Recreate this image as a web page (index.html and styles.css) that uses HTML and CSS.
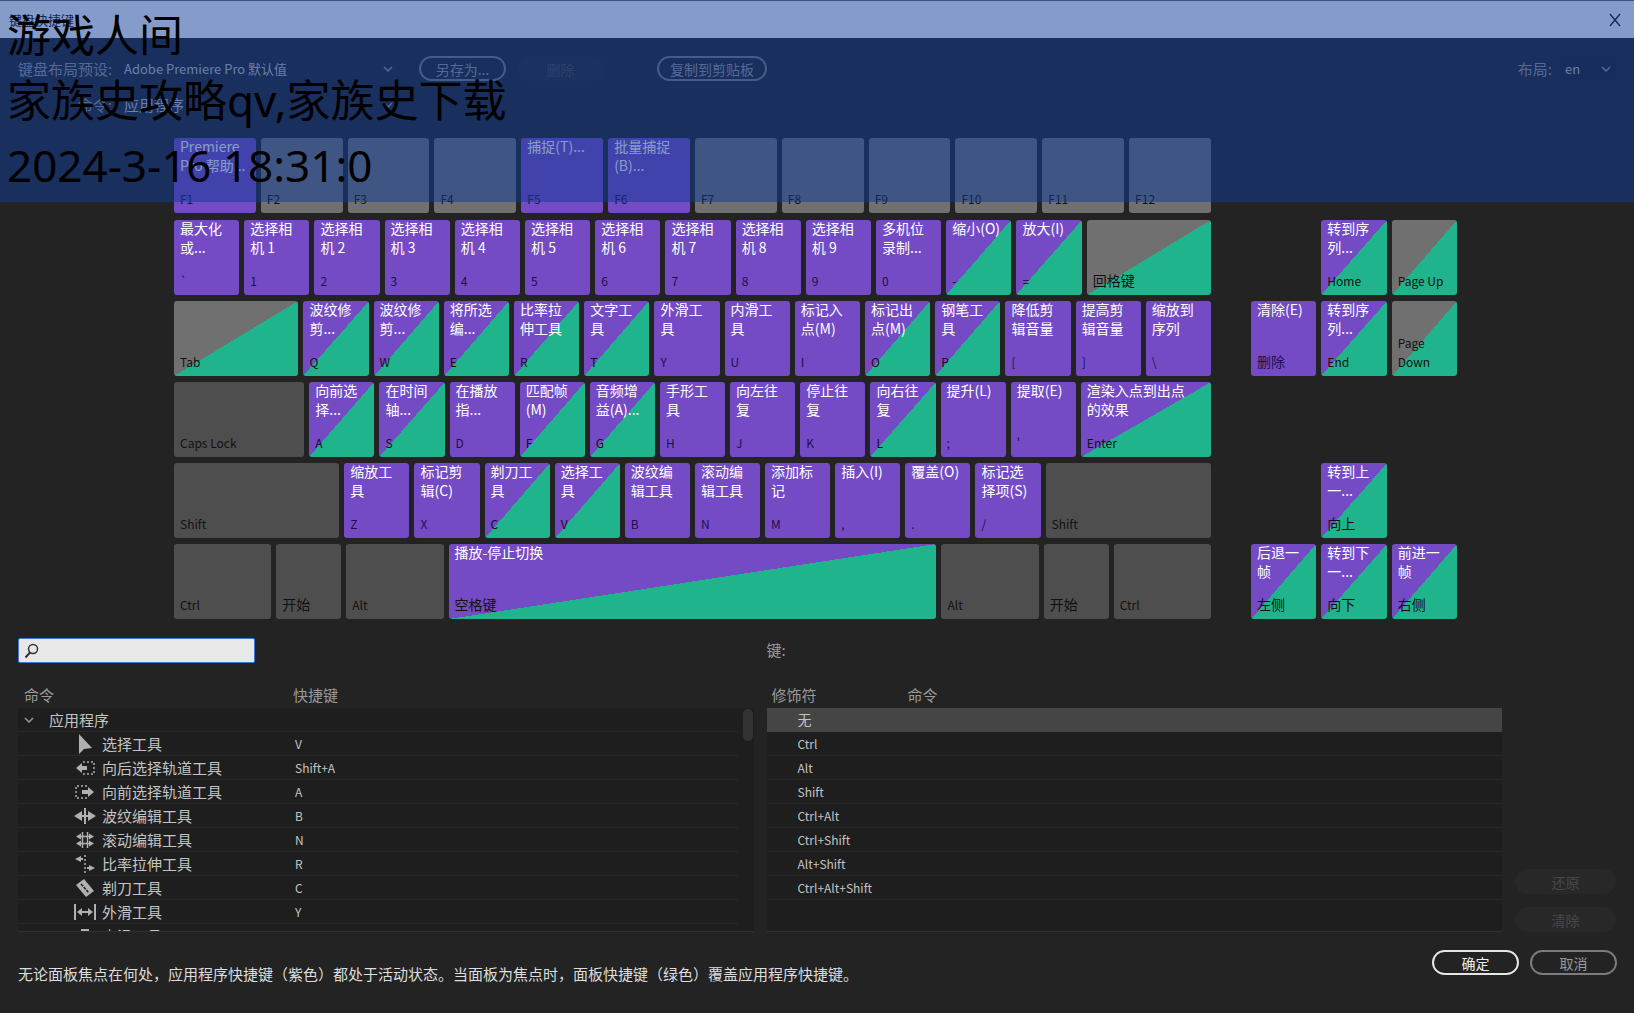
FILE: index.html
```html
<!DOCTYPE html>
<html lang="zh-CN">
<head>
<meta charset="utf-8">
<meta name="viewport" content="width=device-width, initial-scale=1">
<title>键盘快捷键</title>
<link rel="stylesheet" href="styles.css">
</head>
<body>
<div class="dialog">
  <header class="titlebar">
    <h1>键盘快捷键</h1>
    <button class="close" aria-label="关闭"><svg width="12" height="14" viewBox="0 0 12 14"><path d="M1 1l10 12M11 1L1 13" fill="none" stroke="currentColor" stroke-width="1.3"/></svg></button>
  </header>

  <section class="toolbar">
    <div class="toolbar-row">
      <label class="field-label" for="preset">键盘布局预设:</label>
      <span class="picker picker-wide"><select id="preset"><option>Adobe Premiere Pro 默认值</option></select><svg width="10" height="6" viewBox="0 0 10 6"><path d="M1 1l4 4 4-4"/></svg></span>
      <button class="pill">另存为...</button>
      <button class="pill" disabled>删除</button>
      <button class="pill copy">复制到剪贴板</button>
      <label class="layout-label" for="layout">布局:</label>
      <span class="picker picker-small"><select id="layout"><option>en</option></select><svg width="10" height="6" viewBox="0 0 10 6"><path d="M1 1l4 4 4-4"/></svg></span>
    </div>
    <div class="toolbar-row">
      <label class="field-label" for="scope">命令:</label>
      <span class="picker picker-wide"><select id="scope"><option>应用程序</option></select><svg width="10" height="6" viewBox="0 0 10 6"><path d="M1 1l4 4 4-4"/></svg></span>
    </div>
  </section>

  <section class="keyboard">
    <div class="main-keys">
      <div class="key-row fn-row">
        <button class="key app"><span>Premiere<br>Pro 帮助...</span><kbd>F1</kbd></button>
        <button class="key free"><kbd>F2</kbd></button>
        <button class="key free"><kbd>F3</kbd></button>
        <button class="key free"><kbd>F4</kbd></button>
        <button class="key app"><span>捕捉(T)...</span><kbd>F5</kbd></button>
        <button class="key app"><span>批量捕捉<br>(B)...</span><kbd>F6</kbd></button>
        <button class="key free"><kbd>F7</kbd></button>
        <button class="key free"><kbd>F8</kbd></button>
        <button class="key free"><kbd>F9</kbd></button>
        <button class="key free"><kbd>F10</kbd></button>
        <button class="key free"><kbd>F11</kbd></button>
        <button class="key free"><kbd>F12</kbd></button>
      </div>
      <div class="key-row">
        <button class="key app"><span>最大化<br>或...</span><kbd>`</kbd></button>
        <button class="key app"><span>选择相<br>机 1</span><kbd>1</kbd></button>
        <button class="key app"><span>选择相<br>机 2</span><kbd>2</kbd></button>
        <button class="key app"><span>选择相<br>机 3</span><kbd>3</kbd></button>
        <button class="key app"><span>选择相<br>机 4</span><kbd>4</kbd></button>
        <button class="key app"><span>选择相<br>机 5</span><kbd>5</kbd></button>
        <button class="key app"><span>选择相<br>机 6</span><kbd>6</kbd></button>
        <button class="key app"><span>选择相<br>机 7</span><kbd>7</kbd></button>
        <button class="key app"><span>选择相<br>机 8</span><kbd>8</kbd></button>
        <button class="key app"><span>选择相<br>机 9</span><kbd>9</kbd></button>
        <button class="key app"><span>多机位<br>录制...</span><kbd>0</kbd></button>
        <button class="key both"><span>缩小(O)</span><kbd>-</kbd></button>
        <button class="key both"><span>放大(I)</span><kbd>=</kbd></button>
        <button class="key panel w-tab"><kbd class="zh">回格键</kbd></button>
      </div>
      <div class="key-row">
        <button class="key panel w-tab"><kbd>Tab</kbd></button>
        <button class="key both"><span>波纹修<br>剪...</span><kbd>Q</kbd></button>
        <button class="key both"><span>波纹修<br>剪...</span><kbd>W</kbd></button>
        <button class="key both"><span>将所选<br>编...</span><kbd>E</kbd></button>
        <button class="key both"><span>比率拉<br>伸工具</span><kbd>R</kbd></button>
        <button class="key both"><span>文字工<br>具</span><kbd>T</kbd></button>
        <button class="key app"><span>外滑工<br>具</span><kbd>Y</kbd></button>
        <button class="key app"><span>内滑工<br>具</span><kbd>U</kbd></button>
        <button class="key app"><span>标记入<br>点(M)</span><kbd>I</kbd></button>
        <button class="key both"><span>标记出<br>点(M)</span><kbd>O</kbd></button>
        <button class="key both"><span>钢笔工<br>具</span><kbd>P</kbd></button>
        <button class="key app"><span>降低剪<br>辑音量</span><kbd>[</kbd></button>
        <button class="key app"><span>提高剪<br>辑音量</span><kbd>]</kbd></button>
        <button class="key app"><span>缩放到<br>序列</span><kbd>\</kbd></button>
      </div>
      <div class="key-row">
        <button class="key fixed w-caps"><kbd>Caps Lock</kbd></button>
        <button class="key both"><span>向前选<br>择...</span><kbd>A</kbd></button>
        <button class="key both"><span>在时间<br>轴...</span><kbd>S</kbd></button>
        <button class="key app"><span>在播放<br>指...</span><kbd>D</kbd></button>
        <button class="key both"><span>匹配帧<br>(M)</span><kbd>F</kbd></button>
        <button class="key both"><span>音频增<br>益(A)...</span><kbd>G</kbd></button>
        <button class="key app"><span>手形工<br>具</span><kbd>H</kbd></button>
        <button class="key app"><span>向左往<br>复</span><kbd>J</kbd></button>
        <button class="key app"><span>停止往<br>复</span><kbd>K</kbd></button>
        <button class="key both"><span>向右往<br>复</span><kbd>L</kbd></button>
        <button class="key app"><span>提升(L)</span><kbd>;</kbd></button>
        <button class="key app"><span>提取(E)</span><kbd>'</kbd></button>
        <button class="key both w-caps"><span>渲染入点到出点<br>的效果</span><kbd>Enter</kbd></button>
      </div>
      <div class="key-row">
        <button class="key fixed w-shift"><kbd>Shift</kbd></button>
        <button class="key app"><span>缩放工<br>具</span><kbd>Z</kbd></button>
        <button class="key app"><span>标记剪<br>辑(C)</span><kbd>X</kbd></button>
        <button class="key both"><span>剃刀工<br>具</span><kbd>C</kbd></button>
        <button class="key both"><span>选择工<br>具</span><kbd>V</kbd></button>
        <button class="key app"><span>波纹编<br>辑工具</span><kbd>B</kbd></button>
        <button class="key app"><span>滚动编<br>辑工具</span><kbd>N</kbd></button>
        <button class="key app"><span>添加标<br>记</span><kbd>M</kbd></button>
        <button class="key app"><span>插入(I)</span><kbd>,</kbd></button>
        <button class="key app"><span>覆盖(O)</span><kbd>.</kbd></button>
        <button class="key app"><span>标记选<br>择项(S)</span><kbd>/</kbd></button>
        <button class="key fixed w-shift"><kbd>Shift</kbd></button>
      </div>
      <div class="key-row">
        <button class="key fixed w-ctrl"><kbd>Ctrl</kbd></button>
        <button class="key fixed"><kbd class="zh">开始</kbd></button>
        <button class="key fixed w-ctrl"><kbd>Alt</kbd></button>
        <button class="key both w-space"><span>播放-停止切换</span><kbd class="zh">空格键</kbd></button>
        <button class="key fixed w-ctrl"><kbd>Alt</kbd></button>
        <button class="key fixed"><kbd class="zh">开始</kbd></button>
        <button class="key fixed w-ctrl"><kbd>Ctrl</kbd></button>
      </div>
    </div>

    <div class="nav-keys">
      <div class="key-row fn-row"></div>
      <div class="key-row">
        <i class="blank"></i>
        <button class="key both"><span>转到序<br>列...</span><kbd>Home</kbd></button>
        <button class="key panel"><kbd>Page Up</kbd></button>
      </div>
      <div class="key-row">
        <button class="key app"><span>清除(E)</span><kbd class="zh">删除</kbd></button>
        <button class="key both"><span>转到序<br>列...</span><kbd>End</kbd></button>
        <button class="key panel"><kbd>Page<br>Down</kbd></button>
      </div>
      <div class="key-row"></div>
      <div class="key-row">
        <i class="blank"></i>
        <button class="key both"><span>转到上<br>一...</span><kbd class="zh">向上</kbd></button>
        <i class="blank"></i>
      </div>
      <div class="key-row">
        <button class="key both"><span>后退一<br>帧</span><kbd class="zh">左侧</kbd></button>
        <button class="key both"><span>转到下<br>一...</span><kbd class="zh">向下</kbd></button>
        <button class="key both"><span>前进一<br>帧</span><kbd class="zh">右侧</kbd></button>
      </div>
    </div>
  </section>

  <section class="lists">
    <div class="search">
      <svg width="15" height="16" viewBox="0 0 15 16"><circle cx="9" cy="6" r="4.5" fill="none" stroke="#333" stroke-width="1.5"/><path d="M6 9.500L1.500 14.500" stroke="#333" stroke-width="2"/></svg>
      <input type="search" aria-label="搜索命令">
    </div>
    <p class="key-name">键:</p>

    <div class="list commands">
      <table>
        <colgroup><col class="col-command"><col></colgroup>
        <thead><tr><th>命令</th><th>快捷键</th></tr></thead>
        <tbody>
          <tr><td><div class="group"><svg width="10" height="6" viewBox="0 0 10 6"><path d="M1 1l4 4 4-4"/></svg>应用程序</div></td><td></td></tr>
          <tr><td><div class="tool"><svg width="22" height="20" viewBox="0 0 22 20"><path class="f" d="M5 0v20l5-5 8-1z"/></svg>选择工具</div></td><td>V</td></tr>
          <tr><td><div class="tool"><svg width="22" height="20" viewBox="0 0 22 20"><path class="f" d="M2 10l6-5v3h5v4H8v3z"/><path class="s" stroke-dasharray="2 2" d="M9 4h11v12H9"/></svg>向后选择轨道工具</div></td><td>Shift+A</td></tr>
          <tr><td><div class="tool"><svg width="22" height="20" viewBox="0 0 22 20"><path class="f" d="M20 10l-6-5v3H8v4h6v3z"/><path class="s" stroke-dasharray="2 2" d="M13 4H2v12h11"/></svg>向前选择轨道工具</div></td><td>A</td></tr>
          <tr><td><div class="tool"><svg width="22" height="20" viewBox="0 0 22 20"><path class="f" d="M0 10l8-5v4h2V2h2v7h2V5l8 5-8 5v-4h-2v7h-2v-7H8v4z"/></svg>波纹编辑工具</div></td><td>B</td></tr>
          <tr><td><div class="tool"><svg width="22" height="20" viewBox="0 0 22 20"><path class="s" d="M4 6.500h14M4 13.500h14M8.500 2v16M13.500 2v16"/><path class="f" d="M2 6.500l5-3v6zM20 6.500l-5-3v6zM2 13.500l5-3v6zM20 13.500l-5-3v6z"/></svg>滚动编辑工具</div></td><td>N</td></tr>
          <tr><td><div class="tool"><svg width="22" height="20" viewBox="0 0 22 20"><path class="f" d="M1 5l6-3v2h2v2H7v2zM21 14l-6-3v2h-2v2h2v2z"/><path class="s" stroke-dasharray="2 2" d="M11 1v18"/></svg>比率拉伸工具</div></td><td>R</td></tr>
          <tr><td><div class="tool"><svg width="22" height="20" viewBox="0 0 22 20"><path class="f" d="M2 7l8-6 10 12-8 6z"/><path d="M7 6l8 9" fill="none" stroke="#1e1e1e" stroke-width="1.500" stroke-dasharray="3 1"/></svg>剃刀工具</div></td><td>C</td></tr>
          <tr><td><div class="tool"><svg width="22" height="20" viewBox="0 0 22 20"><path class="f" d="M0 2h2v16H0zM20 2h2v16h-2zM3 10l5-4v3h6V6l5 4-5 4v-3H8v3z"/></svg>外滑工具</div></td><td>Y</td></tr>
          <tr><td><div class="tool"><svg width="22" height="20" viewBox="0 0 22 20"><path class="f" d="M7 3h8v14h-2V5H9v12H7zM0 10l5-4v8zM22 10l-5-4v8z"/></svg>内滑工具</div></td><td>U</td></tr>
        </tbody>
      </table>
      <div class="scrollbar"><div class="thumb"></div></div>
    </div>

    <div class="list modifiers">
      <table>
        <colgroup><col class="col-modifier"><col></colgroup>
        <thead><tr><th>修饰符</th><th>命令</th></tr></thead>
        <tbody>
          <tr class="selected"><td>无</td><td></td></tr>
          <tr><td>Ctrl</td><td></td></tr>
          <tr><td>Alt</td><td></td></tr>
          <tr><td>Shift</td><td></td></tr>
          <tr><td>Ctrl+Alt</td><td></td></tr>
          <tr><td>Ctrl+Shift</td><td></td></tr>
          <tr><td>Alt+Shift</td><td></td></tr>
          <tr><td>Ctrl+Alt+Shift</td><td></td></tr>
        </tbody>
      </table>
    </div>

    <div class="side-actions">
      <button class="pill" disabled>还原</button>
      <button class="pill" disabled>清除</button>
    </div>
  </section>

  <footer class="footer">
    <p>无论面板焦点在何处，应用程序快捷键（紫色）都处于活动状态。当面板为焦点时，面板快捷键（绿色）覆盖应用程序快捷键。</p>
    <button class="pill primary">确定</button>
    <button class="pill">取消</button>
  </footer>

  <div class="banner">
    <p>游戏人间</p>
    <p>家族史攻略qv,家族史下载</p>
    <p>2024-3-16 18:31:0</p>
  </div>
</div>
</body>
</html>
```
FILE: styles.css
```css
:root {
  --bg: #232323;
  --list: #1e1e1e;
  --line: #292929;
  --text: #c4c4c4;
  --muted: #9a9a9a;
  --purple: #744bc5;
  --green: #20b48c;
  --grey: #707070;
  --dark: #4e4e4e;
}

* {
  box-sizing: border-box;
}

body {
  margin: 0;
  background: var(--bg);
  color: var(--text);
  font-family: "Noto Sans CJK SC", sans-serif;
  font-size: 15px;
  line-height: 24px;
}

h1,
p {
  margin: 0;
  font-weight: 400;
}

button,
select,
input {
  margin: 0;
  padding: 0;
  border: 0;
  background: none;
  color: inherit;
  font: inherit;
}

.dialog {
  position: relative;
  min-height: 100vh;
  border-top: 1px solid #6b6b6b;
}

.titlebar {
  display: flex;
  align-items: center;
  justify-content: space-between;
  height: 37px;
  padding: 0 13px 0 9px;
  background: #fff;
  color: #111;
}

.titlebar h1 {
  font-size: 13px;
}

.close {
  display: flex;
}

/* Preset, scope and layout pickers */
.toolbar {
  display: flex;
  flex-direction: column;
  gap: 11px;
  padding: 18px 18px 0;
}

.toolbar-row {
  display: flex;
  align-items: center;
  height: 25px;
}

.field-label {
  width: 106px;
  padding-right: 12px;
  color: var(--muted);
  text-align: right;
  white-space: nowrap;
}

.picker {
  display: grid;
  align-items: center;
}

.picker select,
.picker svg {
  grid-area: 1 / 1;
}

.picker select {
  appearance: none;
  width: 100%;
  font-size: 13px;
}

.picker svg {
  justify-self: end;
  pointer-events: none;
}

.picker-wide {
  width: 269px;
  margin-right: 26px;
}

.toolbar-row:last-child select {
  font-size: 15px;
}

.picker-small {
  width: 56px;
  padding: 0 5px;
  background: #1f1f1f;
}

.layout-label {
  margin: 0 8px 0 auto;
  color: var(--muted);
}

.picker svg path,
.group svg path {
  fill: none;
  stroke: #999;
  stroke-width: 1.5;
}

.pill {
  flex: none;
  width: 87px;
  height: 25px;
  border: 2px solid #7c7c7c;
  border-radius: 13px;
  color: var(--muted);
  font-size: 14px;
  line-height: 20px;
}

.pill:disabled {
  border-color: #282828;
  background: #282828;
  color: #484848;
}

.pill + .pill {
  margin-left: 11px;
}

.pill + .copy {
  width: 110px;
  margin-left: 53px;
}

/* Keyboard */
.keyboard {
  display: flex;
  gap: 40px;
  margin-top: 21px;
  padding: 0 177px 0 174px;
}

.main-keys,
.nav-keys {
  display: flex;
  flex-direction: column;
  gap: 6px;
  min-width: 0;
}

.main-keys {
  flex: 1037 1 0;
}

.nav-keys {
  flex: 206 1 0;
}

.key-row {
  display: flex;
  gap: 5px;
  height: 75px;
}

.fn-row {
  margin-bottom: 1px;
}

.key,
.blank {
  flex: 65 1 65px;
  min-width: 0;
}

.w-tab { flex: 124 1 124px; }
.w-caps { flex: 130 1 130px; }
.w-shift { flex: 165 1 165px; }
.w-ctrl { flex: 97 1 97px; }
.w-space { flex: 487 1 487px; }

.key {
  display: flex;
  flex-direction: column;
  padding: 0 0 5px 6px;
  border-radius: 3px;
  color: #fff;
  font-size: 14px;
  line-height: 19px;
  text-align: left;
  white-space: nowrap;
}

.key span {
  margin-top: -1px;
}

.key kbd {
  margin-top: auto;
  color: #111;
  font-family: inherit;
  font-size: 12px;
}

.key kbd.zh {
  font-size: 14px;
}

.key.app kbd { color: #1f0f4a; }
.app { background: var(--purple); }
.free { background: var(--grey); }
.fixed { background: var(--dark); }
.both { background: linear-gradient(to bottom right, var(--purple) 50%, var(--green) 50%); }
.panel { background: linear-gradient(to bottom right, var(--grey) 50%, var(--green) 50%); }

/* Command and modifier lists */
.lists {
  display: grid;
  grid-template-columns: 1fr 1fr 101px;
  column-gap: 13px;
  row-gap: 18px;
  margin-top: 19px;
  padding: 0 18px;
}

.search {
  display: flex;
  align-items: center;
  gap: 6px;
  width: 237px;
  height: 25px;
  padding: 0 5px;
  border: 1px solid #3c78d2;
  border-radius: 2px;
  background: #e8e8e8;
}

.search input {
  flex: 1;
  min-width: 0;
  outline: none;
  color: #222;
}

.key-name {
  color: var(--muted);
}

.list {
  grid-row: 2;
  display: flex;
  height: 251px;
  overflow: hidden;
  border-bottom: 1px solid #303030;
  background: linear-gradient(var(--bg) 27px, var(--list) 27px);
}

.list table {
  flex: 1;
  border-collapse: separate;
  border-spacing: 0;
  table-layout: fixed;
  align-self: flex-start;
}

.col-command { width: 269px; }
.col-modifier { width: 136px; }

.list th {
  height: 27px;
  padding: 0 6px;
  color: var(--muted);
  font-weight: 400;
  text-align: left;
}

.list td {
  height: 24px;
  padding: 0 6px;
  border-bottom: 1px solid var(--line);
  line-height: 23px;
  white-space: nowrap;
}

.commands td:last-child,
.modifiers td {
  font-size: 12px;
}

.modifiers .selected td {
  background: #454545;
  border-color: #454545;
  font-size: 14px;
}

.commands td:last-child {
  padding-left: 8px;
}

.modifiers th {
  padding-left: 5px;
}

.modifiers td {
  padding-left: 31px;
}

.group,
.tool {
  display: flex;
  align-items: center;
  height: 23px;
}

.group {
  gap: 15px;
}

.tool {
  gap: 6px;
  padding-left: 50px;
}

.tool .f {
  fill: #b0b0b0;
}

.tool .s {
  fill: none;
  stroke: #b0b0b0;
  stroke-width: 1.5;
}

.scrollbar {
  width: 16px;
  padding: 28px 1px 0 5px;
}

.thumb {
  height: 32px;
  border-radius: 5px;
  background: #333;
}

.side-actions {
  grid-area: 2 / 3;
  display: flex;
  flex-direction: column;
  justify-content: flex-end;
  gap: 13px;
}

.side-actions .pill {
  width: 100%;
  margin: 0;
}

/* Footer */
.footer {
  display: flex;
  align-items: flex-start;
  margin-top: 18px;
  padding: 0 17px 12px 18px;
}

.footer p {
  flex: 1;
  padding-top: 12px;
  color: #ddd;
}

.footer .primary {
  border-color: #e6e6e6;
  color: #eee;
}

/* Translucent caption across the top of the window */
.banner {
  position: absolute;
  top: -1px;
  left: 0;
  right: 0;
  padding: 3px 7px 4px;
  background: rgba(15, 59, 149, 0.51);
  color: #000;
  font-family: "Noto Sans", "Noto Sans CJK SC", sans-serif;
  font-size: 44px;
  line-height: 65px;
  pointer-events: none;
}
```
